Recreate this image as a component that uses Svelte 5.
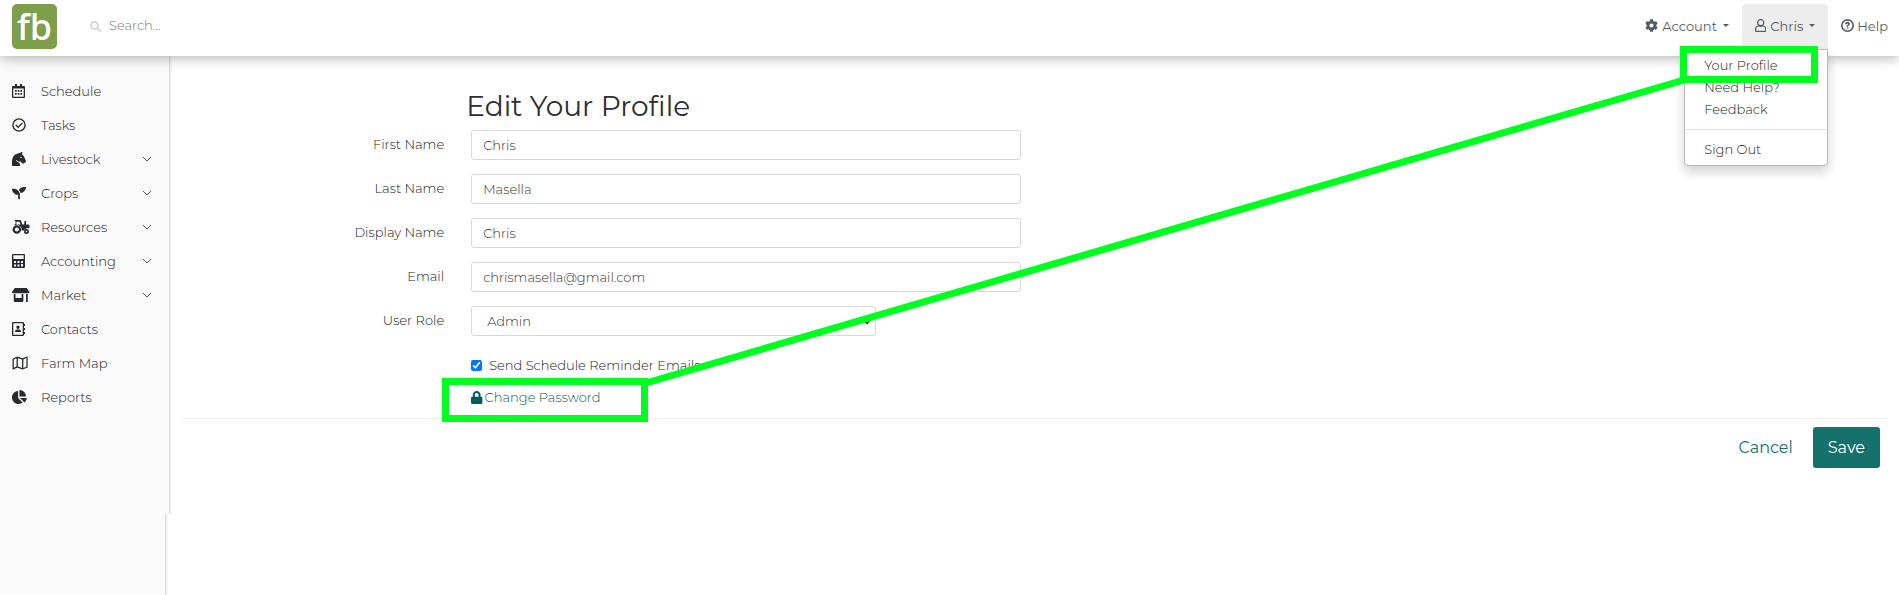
<script>
  let profile = $state({
    first: 'Chris',
    last: 'Masella',
    display: 'Chris',
    email: 'chrismasella@gmail.com',
    role: 'Admin',
    reminders: true
  });

  const fields = [
    { key: 'first', label: 'First Name', type: 'text' },
    { key: 'last', label: 'Last Name', type: 'text' },
    { key: 'display', label: 'Display Name', type: 'text' },
    { key: 'email', label: 'Email', type: 'email' }
  ];

  const nav = [
    { name: 'Schedule', icon: 'calendar' },
    { name: 'Tasks', icon: 'check' },
    { name: 'Livestock', icon: 'horse', more: true },
    { name: 'Crops', icon: 'seedling', more: true },
    { name: 'Resources', icon: 'tractor', more: true },
    { name: 'Accounting', icon: 'calculator', more: true },
    { name: 'Market', icon: 'store', more: true },
    { name: 'Contacts', icon: 'contacts' },
    { name: 'Farm Map', icon: 'map' },
    { name: 'Reports', icon: 'pie' }
  ];

  const icons = {
    calendar: { box: '0 0 13 14', d: 'M3 0h2v2h3V0h2v2h2q1 0 1 1v10q0 1-1 1H1q-1 0-1-1V3q0-1 1-1h2zM1.3 4.500v8.200h10.400V4.500zM3 6h1.700v1.700H3zM5.700 6h1.700v1.700H5.700zM8.400 6h1.700v1.700H8.400zM3 9h1.700v1.700H3zM5.700 9h1.700v1.700H5.700zM8.400 9h1.700v1.700H8.400z' },
    check: { box: '0 0 512 512', d: 'M256 8a248 248 0 1 0 0 496a248 248 0 0 0 0-496zM256 58a198 198 0 1 1 0 396a198 198 0 0 1 0-396zM366 160l36 36-178 178-104-104 36-36 68 68z' },
    horse: { box: '0 0 512 512', d: 'M509.8 332.5l-69.9-164.3c-14.9-41.2-50.4-71-93-79.2 18-10.6 46.3-35.9 34.2-82.3-1.3-5-7.1-7.9-12-6.1L166.9 76.3C35.9 123.4 0 238.9 0 398.8V480c0 17.7 14.3 32 32 32h236.2c23.8 0 39.3-25 28.6-46.3L256 384v-.7c-45.6-3.5-84.6-30.7-104.3-69.6-1.6-3.1-.9-6.9 1.6-9.3l12.1-12.1c3.9-3.9 10.6-2.7 12.9 2.4 14.8 33.7 48.2 57.4 87.4 57.4 17.2 0 33-5.1 46.8-13.2l46 63.9c6 8.4 15.7 13.3 26 13.3h50.3c8.500 0 16.600-3.400 22.600-9.400l45.300-39.800c8.900-9.100 11.700-22.600 7.100-34.400zM328 224c-13.300 0-24-10.700-24-24s10.700-24 24-24 24 10.700 24 24-10.700 24-24 24z' },
    seedling: { box: '0 0 512 512', d: 'M64 96H0c0 123.7 100.3 224 224 224v144c0 8.8 7.2 16 16 16h32c8.8 0 16-7.2 16-16V320C288 196.3 187.7 96 64 96zm384-64c-84.2 0-157.4 46.5-195.7 115.2 27.7 30.2 48.2 66.9 59 107.6C424 243.1 512 147.9 512 32h-64z' },
    tractor: { box: '0 0 640 512', d: 'M96 32q0-32 32-32h166q20 0 30 22l58 138h66V96q0-48 34-80l46 46q-16 16-16 34v64h80q48 0 48 48v60q0 28-24 40a104 104 0 0 0-152 76h-116a168 168 0 0 0-252-180v-52h32V32zM160 64v96h152l-40-96zM176 192a156 156 0 1 0 0 312a156 156 0 0 0 0-312zM176 272a76 76 0 1 1 0 152a76 76 0 0 1 0-152zM528 328a92 92 0 1 0 0 184a92 92 0 0 0 0-184zM528 390a30 30 0 1 1 0 60a30 30 0 0 1 0-60z' },
    calculator: { box: '0 0 13 14', d: 'M1 0h11q1 0 1 1v12q0 1-1 1H1q-1 0-1-1V1q0-1 1-1zM1.300 1.300V5h10.400V1.300zM2 7v2h2V7zM5.500 7v2h2V7zM9 7v2h2V7zM2 10.500v2h2v-2zM5.500 10.500v2h2v-2zM9 10v2.500h2V10z' },
    store: { box: '0 0 640 512', d: 'M100 0h440l96 144q10 48-28 48H32q-38 0-28-48zM64 216h64v152h224V216h64v248q0 48-48 48H112q-48 0-48-48zM512 216h64v296h-64z' },
    contacts: { box: '0 0 13 14', d: 'M1 0h10q1 0 1 1v1h1v2h-1v2h1v2h-1v2h1v2h-1v1q0 1-1 1H1q-1 0-1-1V1q0-1 1-1zM1.300 1.300v11.400h9.400V1.300zM6 3.500a1.700 1.700 0 1 0 0 3.400a1.700 1.700 0 0 0 0-3.400zM3 10q0-2.400 2-2.400h2q2 0 2 2.400z' },
    map: { box: '0 0 592 512', d: 'M20 100L190 20L390 84L572 8V420L390 492L190 428L20 500zM66 132V430L166 388V82zM214 78V386L366 436V128zM414 128V436L526 390V76z' },
    pie: { box: '0 0 544 512', d: 'M527.79 288H290.5l158.03 158.03c6.04 6.04 15.98 6.53 22.19.68 38.7-36.46 65.32-85.61 73.13-140.86 1.34-9.46-6.51-17.85-16.06-17.85zm-15.83-64.8C503.72 103.74 408.26 8.28 288.8.04 279.68-.59 272 7.1 272 16.24V240h223.77c9.14 0 16.82-7.68 16.19-16.8zM224 288V50.71c0-9.55-8.39-17.4-17.84-16.06C86.99 51.49-4.1 155.6.14 280.37 4.5 408.51 114.83 513.59 243.03 511.98c50.4-.63 96.97-16.87 135.26-44.03 7.9-5.6 8.42-17.23 1.57-24.08L224 288z' },
    search: { box: '0 0 512 512', d: 'M505 442.7L405.3 343c-4.5-4.5-10.6-7-17-7H372c27.6-35.3 44-79.7 44-128C416 93.1 322.9 0 208 0S0 93.1 0 208s93.1 208 208 208c48.3 0 92.7-16.4 128-44v16.3c0 6.4 2.5 12.5 7 17l99.7 99.7c9.4 9.4 24.6 9.4 33.9 0l28.3-28.3c9.4-9.4 9.4-24.6.1-34zM208 336c-70.7 0-128-57.2-128-128 0-70.7 57.2-128 128-128 70.7 0 128 57.2 128 128 0 70.7-57.2 128-128 128z' },
    cog: { box: '0 0 512 512', d: 'M487.4 315.7l-42.6-24.6c4.3-23.2 4.3-47 0-70.2l42.6-24.6c4.9-2.8 7.1-8.6 5.5-14-11.1-35.6-30-67.8-54.7-94.6-3.8-4.1-10-5.1-14.8-2.3L380.8 110c-17.9-15.4-38.5-27.3-60.8-35.1V25.8c0-5.6-3.9-10.5-9.4-11.7-36.7-8.2-74.3-7.8-109.2 0-5.5 1.2-9.4 6.1-9.4 11.7V75c-22.2 7.9-42.8 19.8-60.8 35.1L88.7 85.5c-4.9-2.8-11-1.9-14.8 2.3-24.7 26.7-43.6 58.9-54.7 94.6-1.7 5.4.6 11.2 5.5 14L67.3 221c-4.3 23.2-4.3 47 0 70.2l-42.6 24.6c-4.9 2.8-7.1 8.6-5.5 14 11.1 35.6 30 67.8 54.7 94.6 3.8 4.1 10 5.1 14.8 2.3l42.6-24.6c17.9 15.4 38.5 27.3 60.8 35.1v49.2c0 5.6 3.9 10.5 9.4 11.7 36.7 8.2 74.3 7.8 109.2 0 5.5-1.2 9.4-6.1 9.4-11.7v-49.2c22.2-7.9 42.8-19.8 60.8-35.1l42.6 24.6c4.9 2.8 11 1.9 14.8-2.3 24.7-26.7 43.6-58.9 54.7-94.6 1.5-5.5-.7-11.3-5.6-14.1zM256 336c-44.1 0-80-35.9-80-80s35.9-80 80-80 80 35.9 80 80-35.9 80-80 80z' },
    user: { box: '0 0 448 512', d: 'M224 0a144 144 0 0 0-94 253C50 262 0 314 0 390v74q0 48 48 48h352q48 0 48-48v-74c0-76-50-128-130-137A144 144 0 0 0 224 0zM224 48a96 96 0 1 1 0 192a96 96 0 0 1 0-192zM144 300q80 34 160 0q96 4 96 90v74H48v-74q0-86 96-90z' },
    lock: { box: '0 0 448 512', d: 'M400 224h-24v-72C376 68.2 307.8 0 224 0S72 68.2 72 152v72H48c-26.5 0-48 21.5-48 48v192c0 26.5 21.5 48 48 48h352c26.5 0 48-21.5 48-48V272c0-26.5-21.5-48-48-48zm-104 0H152v-72c0-39.7 32.3-72 72-72s72 32.3 72 72v72z' }
  };
</script>

{#snippet icon(name)}
  <svg class="icon" viewBox={icons[name].box} aria-hidden="true">
    <path fill-rule="evenodd" d={icons[name].d} />
  </svg>
{/snippet}

<div class="page">
  <header>
    <a class="logo" href="#home">fb</a>
    <label class="search">
      {@render icon('search')}
      <input type="search" placeholder="Search..." aria-label="Search" />
    </label>
    <nav class="top-nav">
      <button class="top-item">{@render icon('cog')}Account<span class="caret"></span></button>
      <div class="user">
        <button class="top-item open">{@render icon('user')}Chris<span class="caret"></span></button>
        <div class="menu">
          <a href="#profile">Your Profile</a>
          <a href="#help">Need Help?</a>
          <a href="#feedback">Feedback</a>
          <hr />
          <a href="#signout">Sign Out</a>
        </div>
      </div>
      <a class="top-item help" href="#help">
        <svg class="icon" viewBox="0 0 16 16" aria-hidden="true">
          <g fill="none" stroke="currentColor" stroke-width="2">
            <circle cx="8" cy="8" r="7" />
            <path d="M6 6.500Q6 4.500 8 4.500T10 6.300Q10 7.500 8 8.200V9.500M8 10.500V12" />
          </g>
        </svg>Help
      </a>
    </nav>
  </header>

  <div class="body">
    <nav class="sidebar">
      {#each nav as item}
        <a href="#{item.icon}">
          <span class="nav-icon">{@render icon(item.icon)}</span>
          <span class="nav-name">{item.name}</span>
          {#if item.more}
            <svg class="chevron" viewBox="0 0 10 6" aria-hidden="true"><path d="M1 1l4 4 4-4" /></svg>
          {/if}
        </a>
      {/each}
    </nav>

    <main>
      <form onsubmit={(e) => e.preventDefault()}>
        <h1>Edit Your Profile</h1>
        {#each fields as f}
          <div class="row">
            <label for={f.key}>{f.label}</label>
            <div class="control"><input id={f.key} type={f.type} bind:value={profile[f.key]} /></div>
          </div>
        {/each}
        <div class="row">
          <label for="role">User Role</label>
          <div class="control narrow">
            <select id="role" bind:value={profile.role}>
              <option>Admin</option>
              <option>Manager</option>
              <option>Worker</option>
            </select>
          </div>
        </div>
        <div class="row tight">
          <div class="control offset">
            <label class="check">
              <input type="checkbox" bind:checked={profile.reminders} />Send Schedule Reminder Emails
            </label>
          </div>
        </div>
        <div class="row last">
          <div class="control offset">
            <a class="password" href="#password">{@render icon('lock')}Change Password</a>
          </div>
        </div>
        <div class="actions">
          <button type="button" class="cancel">Cancel</button>
          <button type="submit" class="save">Save</button>
        </div>
      </form>
    </main>
  </div>
  <div class="side-tail"></div>

  <svg class="callout" viewBox="0 0 1899 595" aria-hidden="true">
    <rect x="1683.500" y="49.500" width="131" height="30" />
    <rect x="445.500" y="381.500" width="199" height="37" />
    <path d="M646 383L1684 80" />
  </svg>
</div>

<style>
  :global(body) {
    margin: 0;
    background: #fff;
  }

  .page {
    position: relative;
    display: flex;
    flex-direction: column;
    min-height: 100vh;
    font-family: Montserrat, Inter, sans-serif;
    font-size: 13px;
    font-weight: 300;
    line-height: 20px;
    color: #14181c;
  }

  .page * { box-sizing: border-box; }

  button, input, select {
    font: inherit;
    color: inherit;
  }

  a {
    color: inherit;
    text-decoration: none;
  }

  .icon {
    height: 14px;
    fill: currentColor;
    flex-shrink: 0;
  }

  header {
    position: relative;
    z-index: 2;
    display: flex;
    align-items: flex-start;
    height: 56px;
    padding: 4px 0 0 12px;
    background: #fff;
    box-shadow: 0 2px 12px rgba(0, 0, 0, 0.3);
  }

  .logo {
    width: 45px;
    height: 45px;
    border-radius: 5px;
    background: #7d9f4c;
    color: #fff;
    font-family: "Noto Sans", sans-serif;
    font-size: 36px;
    font-weight: 500;
    line-height: 46px;
    text-align: center;
  }

  .search {
    display: flex;
    align-items: center;
    gap: 8px;
    height: 45px;
    margin-left: 33px;
    color: #d5d5d5;
  }

  .search .icon { height: 11px; }

  .search input {
    width: 240px;
    padding: 0 0 3px;
    border: none;
    outline: none;
    background: none;
    color: #666;
  }

  .search input::placeholder { color: #777; }

  .top-nav {
    display: flex;
    margin-left: auto;
  }

  .top-item {
    display: flex;
    align-items: center;
    gap: 4px;
    height: 45px;
    padding: 0 13px 2px;
    border: none;
    border-radius: 4px 4px 0 0;
    background: none;
    color: #535c64;
    cursor: pointer;
    font-weight: 400;
  }

  .top-item .icon { height: 13px; }
  .top-item.open { background: #ededed; }

  .top-item.help {
    gap: 3px;
    padding-right: 11px;
  }

  .caret {
    margin-left: 2px;
    border: 3px solid transparent;
    border-top-color: currentColor;
    border-bottom: none;
  }

  .user { position: relative; }

  .menu {
    position: absolute;
    top: 100%;
    right: 0;
    width: 144px;
    padding: 4px 0 5px;
    background: #fff;
    border: 1px solid #bbb;
    border-radius: 0 0 4px 4px;
    box-shadow: 0 6px 12px rgba(0, 0, 0, 0.18);
  }

  .menu a {
    display: block;
    padding: 0 19px;
    line-height: 22px;
    color: #222;
  }

  .menu hr {
    margin: 9px 0 8px;
    border: none;
    border-top: 1px solid #e0e0e0;
  }

  .body { display: flex; }

  .sidebar {
    width: 170px;
    flex-shrink: 0;
    padding: 18px 0 100px;
    background: #fafafa;
    border-right: 1px solid #ddd;
    box-shadow: 1px 0 2px rgba(0, 0, 0, 0.1);
    clip-path: inset(0 -4px 0 0);
  }

  .sidebar a {
    display: flex;
    align-items: center;
    height: 34px;
    padding: 0 17px 0 12px;
  }

  .nav-icon {
    display: flex;
    width: 29px;
    color: #252b30;
  }

  .nav-name { flex: 1; }

  .chevron {
    width: 10px;
    fill: none;
    stroke: #555;
  }

  .side-tail {
    flex: 1;
    width: 166px;
    background: #fafafa;
    border-right: 1px solid #ddd;
    box-shadow: 1px 0 2px rgba(0, 0, 0, 0.1);
    clip-path: inset(0 -4px 0 0);
  }

  main {
    flex: 1;
    padding-top: 32px;
  }

  h1 {
    margin: 0 0 6px;
    padding-left: calc(100% / 6 + 8px);
    font-size: 28px;
    font-weight: 400;
    line-height: 36px;
    color: #2b2f33;
  }

  .row {
    display: grid;
    grid-template-columns: repeat(12, 1fr);
    align-items: center;
    height: 30px;
    margin-bottom: 14px;
  }

  .row > label {
    grid-column: span 2;
    padding: 0 14px 2px 0;
    text-align: right;
  }

  .control {
    grid-column: span 4;
    padding: 0 14px 0 13px;
  }

  .control.narrow { grid-column: span 3; }
  .control.offset { grid-column: 3 / span 4; }

  .row > .control > input,
  select {
    display: block;
    width: 100%;
    height: 30px;
    padding: 0 11px;
    border: 1px solid #d8d8d8;
    border-radius: 3px;
    background: #fff;
    color: #333;
  }

  .check {
    display: flex;
    align-items: center;
    gap: 7px;
  }

  .check input {
    width: 11px;
    height: 11px;
    margin: 0;
  }

  .row.tight { margin-bottom: 2px; }
  .row.last { margin-bottom: 6px; }

  .password {
    display: flex;
    align-items: center;
    gap: 2px;
    color: #005e59;
  }

  .password .icon { height: 13px; }

  .actions {
    display: flex;
    justify-content: flex-end;
    gap: 5px;
    margin: 0 11px 0 13px;
    padding: 8px 8px 0;
    border-top: 1px solid #ececec;
  }

  .actions button {
    height: 41px;
    padding: 0 15px;
    border: none;
    border-radius: 3px;
    background: none;
    font-size: 16px;
    font-weight: 400;
    cursor: pointer;
  }

  .actions .cancel { color: #14716c; }

  .actions .save {
    background: #14716c;
    color: #fff;
  }

  .callout {
    position: absolute;
    z-index: 3;
    top: 0;
    left: 0;
    width: 100%;
    fill: none;
    stroke: #00ff21;
    stroke-width: 7;
    pointer-events: none;
  }
</style>
